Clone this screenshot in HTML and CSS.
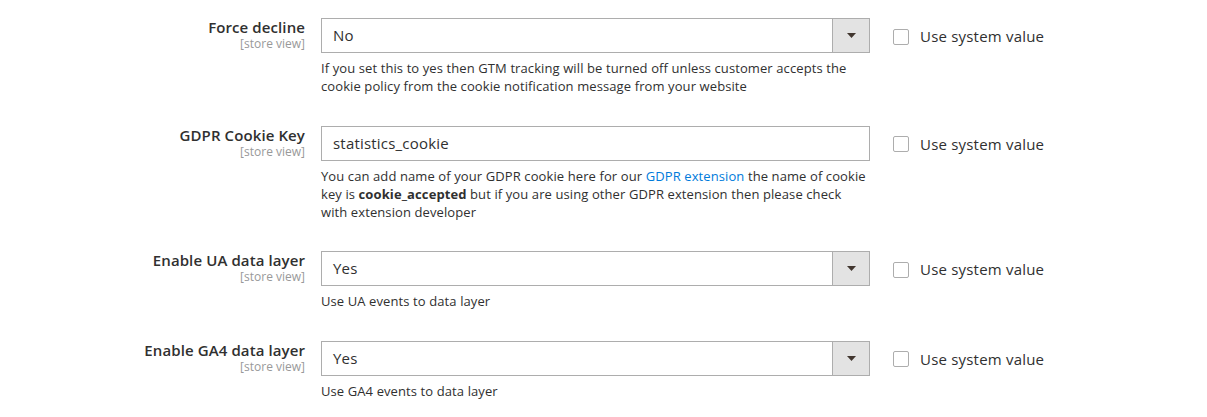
FILE: index.html
```html
<!DOCTYPE html>
<html>
<head>
<meta charset="utf-8">
<link rel="stylesheet" href="styles.css">
</head>
<body>
<div class="config">
  <div class="field">
    <div class="label"><span class="title">Force decline</span><span class="scope">[store view]</span></div>
    <div class="control">
      <div class="select"><span class="value">No</span><span class="arrow"><svg width="9" height="5" viewBox="0 0 9 5"><path d="M0 0H9L4.5 5Z" fill="#41362f"/></svg></span></div>
      <div class="note">If you set this to yes then GTM tracking will be turned off unless customer accepts the cookie policy from the cookie notification message from your website</div>
    </div>
    <label class="system"><span class="checkbox"></span>Use system value</label>
  </div>

  <div class="field">
    <div class="label"><span class="title">GDPR Cookie Key</span><span class="scope">[store view]</span></div>
    <div class="control">
      <div class="input">statistics_cookie</div>
      <div class="note">You can add name of your GDPR cookie here for our <a href="#">GDPR extension</a> the name of cookie key is <strong>cookie_accepted</strong> but if you are using other GDPR extension then please check with extension developer</div>
    </div>
    <label class="system"><span class="checkbox"></span>Use system value</label>
  </div>

  <div class="field">
    <div class="label"><span class="title">Enable UA data layer</span><span class="scope">[store view]</span></div>
    <div class="control">
      <div class="select"><span class="value">Yes</span><span class="arrow"><svg width="9" height="5" viewBox="0 0 9 5"><path d="M0 0H9L4.5 5Z" fill="#41362f"/></svg></span></div>
      <div class="note">Use UA events to data layer</div>
    </div>
    <label class="system"><span class="checkbox"></span>Use system value</label>
  </div>

  <div class="field">
    <div class="label"><span class="title">Enable GA4 data layer</span><span class="scope">[store view]</span></div>
    <div class="control">
      <div class="select"><span class="value">Yes</span><span class="arrow"><svg width="9" height="5" viewBox="0 0 9 5"><path d="M0 0H9L4.5 5Z" fill="#41362f"/></svg></span></div>
      <div class="note">Use GA4 events to data layer</div>
    </div>
    <label class="system"><span class="checkbox"></span>Use system value</label>
  </div>
</div>
</body>
</html>
```
FILE: styles.css
```css
html, body {
  margin: 0;
  padding: 0;
  background: #fff;
}
body {
  font-family: "Open Sans", "Liberation Sans", sans-serif;
  color: #303030;
}
.config {
  padding-top: 18px;
  display: flex;
  flex-direction: column;
  gap: 30.5px;
}
.field {
  display: grid;
  grid-template-columns: 305px 549px auto;
  column-gap: 16px;
  align-items: start;
}
.label {
  display: flex;
  flex-direction: column;
  align-items: flex-end;
  text-align: right;
}
.title {
  font-size: 15px;
  font-weight: 600;
  line-height: 19px;
  letter-spacing: 0.1px;
}
.scope {
  font-size: 12px;
  line-height: 13px;
  color: #999;
}
.control {
  display: flex;
  flex-direction: column;
}
.select, .input {
  box-sizing: border-box;
  height: 35px;
  border: 1px solid #adadad;
  background: #fff;
  font-size: 15px;
  line-height: 19px;
  letter-spacing: 0.2px;
  display: flex;
  align-items: center;
}
.input {
  padding-left: 11px;
}
.select .value {
  flex: 1;
  padding-left: 11px;
}
.select .arrow {
  width: 36px;
  align-self: stretch;
  background: #e3e3e3;
  border-left: 1px solid #adadad;
  display: flex;
  align-items: center;
  justify-content: center;
}
.note {
  margin-top: 6px;
  font-size: 13px;
  line-height: 18px;
  letter-spacing: 0.1px;
}
.note a {
  color: #007bdb;
  text-decoration: none;
}
.note strong {
  font-weight: 700;
}
.system {
  margin-left: 7px;
  height: 35px;
  padding-top: 1px;
  display: flex;
  align-items: center;
  gap: 11px;
  font-size: 15px;
  line-height: 19px;
  letter-spacing: 0.2px;
}
.checkbox {
  box-sizing: border-box;
  width: 16px;
  height: 16px;
  border: 1px solid #adadad;
  border-radius: 2px;
  background: #fff;
}
```
